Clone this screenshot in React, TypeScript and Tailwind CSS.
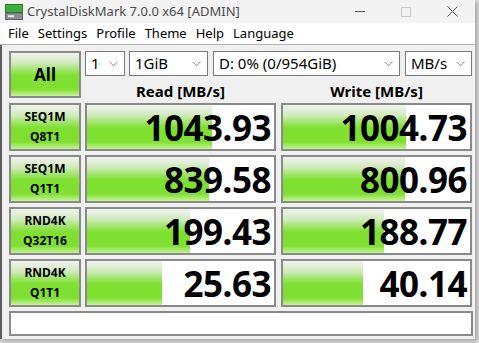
import React from "react";

const GREEN =
  "bg-[linear-gradient(to_bottom,#f1f3f0_0%,#d3ebc0_22%,#9fe46a_40%,#7fe030_52%,#80e032_84%,#c6f39a_100%)]";

const ROWS = [
  { l1: "SEQ1M", l2: "Q8T1", read: "1043.93", rp: 67, write: "1004.73", wp: 66 },
  { l1: "SEQ1M", l2: "Q1T1", read: "839.58", rp: 65, write: "800.96", wp: 65 },
  { l1: "RND4K", l2: "Q32T16", read: "199.43", rp: 55, write: "188.77", wp: 54 },
  { l1: "RND4K", l2: "Q1T1", read: "25.63", rp: 40, write: "40.14", wp: 43 },
];

function Combo({ w, text }: { w: string; text: string }) {
  return (
    <div
      className={`${w} h-[25px] bg-white border border-[#7a7a7a] flex items-center justify-between pl-[5px] pr-[6px] text-[15px] text-black`}
    >
      <span className="leading-none">{text}</span>
      <svg width="9" height="6" viewBox="0 0 9 6" className="shrink-0">
        <path d="M0.5 0.8 L4.5 4.8 L8.5 0.8" fill="none" stroke="#8a8a8a" strokeWidth="1" />
      </svg>
    </div>
  );
}

function Score({ value, pct }: { value: string; pct: number }) {
  return (
    <div className="relative w-[191px] h-[48px] border-2 border-[#8a8a8a] bg-white overflow-hidden">
      <div className={`absolute inset-y-0 left-0 ${GREEN}`} style={{ width: `${pct}%` }} />
      <div className="relative h-full flex items-center justify-end pr-[3px] text-[35px] font-bold text-black leading-none tracking-[-0.5px]">
        {value}
      </div>
    </div>
  );
}

export default function App() {
  return (
    <div
      className="w-[479px] h-[343px] bg-[#d9d9d9] overflow-hidden"
      style={{ fontFamily: '"Segoe UI", "Noto Sans", "Open Sans", sans-serif' }}
    >
      <div className="w-[475px] h-[339px] bg-[#f0f0f0] flex flex-col shadow-[2px_2px_4px_rgba(0,0,0,0.25)]">
        {/* title bar */}
        <div className="h-[23px] bg-[#f3f3f3] flex items-center">
          <svg width="18" height="16" viewBox="0 0 18 16" className="ml-[5px]">
            <rect x="0.5" y="0.5" width="17" height="8" fill="#3fae3f" stroke="#2a7a2a" />
            <rect x="0.5" y="9" width="17" height="6.5" fill="#8a8f94" stroke="#5d6166" />
            <rect x="3" y="11.2" width="6" height="2" fill="#e8ecef" />
          </svg>
          <span className="ml-[4px] text-[13px] text-[#4a4a4a]">CrystalDiskMark 7.0.0 x64 [ADMIN]</span>
          <div className="ml-auto flex items-center">
            <div className="w-[46px] flex justify-center">
              <div className="w-[10px] h-px bg-[#555]" />
            </div>
            <div className="w-[46px] flex justify-center">
              <div className="w-[10px] h-[10px] border border-[#c8c8c8]" />
            </div>
            <div className="w-[46px] flex justify-center">
              <svg width="11" height="11" viewBox="0 0 11 11">
                <path d="M0.5 0.5 L10.5 10.5 M10.5 0.5 L0.5 10.5" stroke="#555" strokeWidth="1" />
              </svg>
            </div>
          </div>
        </div>
        {/* menu */}
        <div className="h-[22px] bg-white border-b border-[#b4b4b4] flex items-center gap-[9px] pl-[8px] text-[13px] text-black">
          <span>File</span>
          <span>Settings</span>
          <span>Profile</span>
          <span>Theme</span>
          <span>Help</span>
          <span>Language</span>
        </div>
        {/* body */}
        <div className="flex-1 border-l-2 border-[#5c5c5c] pl-[7px] pt-[6px] flex flex-col">
          <div className="flex gap-[4px]">
            <div
              className={`w-[72px] h-[47px] border-2 border-[#8a8a8a] ${GREEN} flex items-center justify-center text-[17px] font-bold text-black`}
            >
              All
            </div>
            <div className="flex flex-col">
              <div className="flex">
                <Combo w="w-[40px]" text="1" />
                <div className="w-[4px]" />
                <Combo w="w-[79px]" text="1GiB" />
                <div className="w-[5px]" />
                <Combo w="w-[187px]" text="D: 0% (0/954GiB)" />
                <div className="w-[5px]" />
                <Combo w="w-[67px]" text="MB/s" />
              </div>
              <div className="flex gap-[5px] h-[27px] pt-[4px] items-center text-[15px] font-bold text-black">
                <div className="w-[191px] text-center">Read [MB/s]</div>
                <div className="w-[191px] text-center">Write [MB/s]</div>
              </div>
            </div>
          </div>
          <div className="flex flex-col gap-[4px]">
            {ROWS.map((r) => (
              <div key={r.l1 + r.l2} className="flex">
                <div
                  className={`w-[72px] h-[48px] border-2 border-[#8a8a8a] ${GREEN} flex flex-col items-center justify-center text-[12px] font-bold leading-[20px] text-black`}
                >
                  <span>{r.l1}</span>
                  <span>{r.l2}</span>
                </div>
                <div className="w-[4px]" />
                <Score value={r.read} pct={r.rp} />
                <div className="w-[5px]" />
                <Score value={r.write} pct={r.wp} />
              </div>
            ))}
          </div>
          <div className="mt-[4px] w-[464px] h-[25px] bg-white border-2 border-[#8a8a8a]" />
        </div>
      </div>
    </div>
  );
}
